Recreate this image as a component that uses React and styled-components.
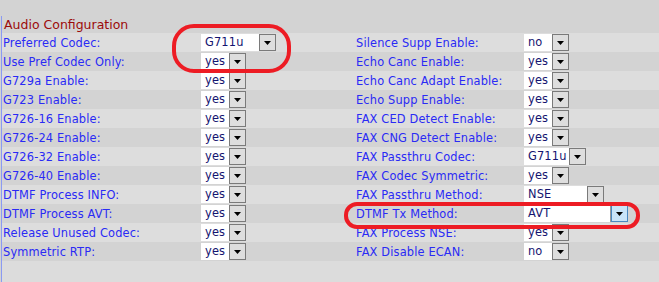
import React from 'react'
import styled, { createGlobalStyle, css } from 'styled-components'

const GlobalStyle = createGlobalStyle`
	html, body {
		margin: 0;
		padding: 0;
		background: #d3d3d3;
	}
	body {
		font-family: "DejaVu Sans", Verdana, sans-serif;
	}
`

const Page = styled.div`
	position: relative;
	width: 659px;
	height: 282px;
	overflow: hidden;
	background: #d3d3d3;
	padding-top: 16px;
	box-sizing: border-box;
`

const Panel = styled.div`
	margin-left: 1px;
	border-left: 1px solid #8a9af2;
	height: 100%;
	background: #dcdcdc;
`

const Title = styled.div`
	height: 17px;
	line-height: 17px;
	padding-left: 2px;
	background: #d3d3d3;
	color: #9c0a0a;
	font-size: 12.5px;
`

const Row = styled.div`
	display: grid;
	grid-template-columns: 199px 154px 169px 1fr;
	height: 19px;
	align-items: center;
	background: ${props => (props.odd ? '#dddddd' : '#d3d3d3')};
`

const Label = styled.span`
	padding-left: 1px;
	font-size: 11.4px;
	letter-spacing: 0.15px;
	color: #2a2af5;
	white-space: nowrap;
`

const SelectBox = styled.div`
	display: flex;
	height: 17px;
`

const Field = styled.span`
	box-sizing: border-box;
	width: ${props => props.w}px;
	height: 17px;
	line-height: 17px;
	padding-left: 4px;
	background: #fff;
	color: #141470;
	font-size: 11.4px;
	letter-spacing: 0.15px;
	${props =>
		props.focused &&
		css`
			border-right: 1px solid #9a9a9a;
		`}
`

const Arrow = styled.span`
	box-sizing: border-box;
	width: 17px;
	height: 17px;
	display: flex;
	align-items: center;
	justify-content: center;
	${props =>
		props.focused
			? css`
					background: #c8e4f8;
					border: 1px solid #4a88c0;
			  `
			: css`
					background: #dedede;
					border: 1px solid #7a7a7a;
			  `}

	> svg {
		width: 7px;
		height: 4px;
	}
`

const Mark = styled.svg`
	position: absolute;
	pointer-events: none;
`

const Select = ({ value, w, focused }) => (
	<SelectBox>
		<Field w={w} focused={focused}>
			{value}
		</Field>
		<Arrow focused={focused}>
			<svg viewBox="0 0 7 4">
				<path d="M0 0h7L3.5 4z" fill="#000" />
			</svg>
		</Arrow>
	</SelectBox>
)

const rows = [
	['Preferred Codec:', 'G711u', 58, 'Silence Supp Enable:', 'no', 28],
	['Use Pref Codec Only:', 'yes', 28, 'Echo Canc Enable:', 'yes', 28],
	['G729a Enable:', 'yes', 28, 'Echo Canc Adapt Enable:', 'yes', 28],
	['G723 Enable:', 'yes', 28, 'Echo Supp Enable:', 'yes', 28],
	['G726-16 Enable:', 'yes', 28, 'FAX CED Detect Enable:', 'yes', 28],
	['G726-24 Enable:', 'yes', 28, 'FAX CNG Detect Enable:', 'yes', 28],
	['G726-32 Enable:', 'yes', 28, 'FAX Passthru Codec:', 'G711u', 45],
	['G726-40 Enable:', 'yes', 28, 'FAX Codec Symmetric:', 'yes', 28],
	['DTMF Process INFO:', 'yes', 28, 'FAX Passthru Method:', 'NSE', 63],
	['DTMF Process AVT:', 'yes', 28, 'DTMF Tx Method:', 'AVT', 87, true],
	['Release Unused Codec:', 'yes', 28, 'FAX Process NSE:', 'yes', 28],
	['Symmetric RTP:', 'yes', 28, 'FAX Disable ECAN:', 'no', 28]
]

const App = () => (
	<Page>
		<GlobalStyle />
		<Panel>
			<Title>Audio Configuration</Title>
			{rows.map(([l, lv, lw, r, rv, rw, focused], i) => (
				<Row key={l} odd={i % 2 === 0}>
					<Label>{l}</Label>
					<Select value={lv} w={lw} />
					<Label>{r}</Label>
					<Select value={rv} w={rw} focused={focused} />
				</Row>
			))}
		</Panel>

		<Mark style={{ left: 171, top: 23 }} width="122" height="52">
			<rect x="3" y="3" width="115" height="45" rx="20" fill="none" stroke="#ed1c24" strokeWidth="4" />
		</Mark>
		<Mark style={{ left: 343, top: 201 }} width="298" height="29">
			<rect x="3" y="3" width="292" height="23" rx="11" fill="none" stroke="#ed1c24" strokeWidth="4" />
		</Mark>
	</Page>
)

export default App
